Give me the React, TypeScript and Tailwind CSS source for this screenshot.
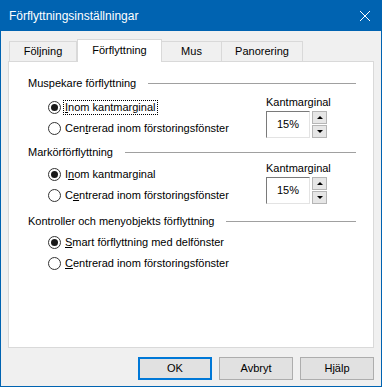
import React from "react";

const font = { fontFamily: "Tahoma, 'Liberation Sans', Arial, sans-serif" };

function Radio({ checked, children, focus }: { checked?: boolean; children: React.ReactNode; focus?: boolean }) {
  return (
    <div className="flex items-center h-[21px]">
      <span className="w-[13px] h-[13px] rounded-full border border-[#333] bg-white flex items-center justify-center ml-[39px] mr-[3px]">
        {checked && <span className="w-[7px] h-[7px] rounded-full bg-[#1a1a1a]" />}
      </span>
      <span className={focus ? "outline outline-1 outline-dotted outline-[#000] px-[1px] leading-[13px]" : "px-[1px]"}>
        {children}
      </span>
    </div>
  );
}

function Legend({ text }: { text: string }) {
  return (
    <div className="flex items-center h-[16px] pl-[19px] pr-[17px]">
      <span>{text}</span>
      <span className="flex-1 h-px bg-[#a0a0a0] ml-[12px]" />
    </div>
  );
}

function Spin({ top }: { top?: boolean }) {
  return (
    <div className={"flex flex-col items-start w-[65px] " + (top ? "pt-[3px]" : "")}>
      <div className="h-[16px] leading-[16px] mb-[1px]">Kantmarginal</div>
      <div className="flex">
        <div className="w-[44px] h-[27px] bg-white border-t border-l border-[#7a7a7a] border-r border-b border-r-[#e3e3e3] border-b-[#e3e3e3] flex items-center justify-center">
          15%
        </div>
        <div className="flex flex-col ml-[2px] gap-[1px]">
          <div className="w-[15px] h-[13px] bg-[#e6e6e6] border border-[#b5b5b5] flex items-center justify-center">
            <span className="w-0 h-0 border-l-[3px] border-r-[3px] border-b-[3px] border-l-transparent border-r-transparent border-b-black" />
          </div>
          <div className="w-[15px] h-[13px] bg-[#e6e6e6] border border-[#b5b5b5] flex items-center justify-center">
            <span className="w-0 h-0 border-l-[3px] border-r-[3px] border-t-[3px] border-l-transparent border-r-transparent border-t-black" />
          </div>
        </div>
      </div>
    </div>
  );
}

function Btn({ label, def }: { label: string; def?: boolean }) {
  return (
    <div
      className={
        "w-[74px] h-[23px] bg-[#e1e1e1] flex items-center justify-center " +
        (def ? "border-2 border-[#0078d7]" : "border border-[#adadad]")
      }
    >
      {label}
    </div>
  );
}

export default function App() {
  return (
    <div style={font} className="w-[382px] h-[387px] bg-[#0063b1] flex flex-col text-[11px] text-black">
      <div className="h-[31px] flex items-center justify-between pl-[9px] pr-[10px] text-white text-[12px]" style={{ fontFamily: "'Segoe UI', 'Liberation Sans', Arial, sans-serif" }}>
        <span>Förflyttningsinställningar</span>
        <svg width="12" height="12" viewBox="0 0 12 12" className="mr-[1px]">
          <path d="M1 1 L11 11 M11 1 L1 11" stroke="white" strokeWidth="1" />
        </svg>
      </div>
      <div className="flex-1 mx-px mb-px bg-[#f0f0f0] flex flex-col px-[7px]">
        <div className="flex items-end h-[30px] pl-[1px]">
          <div className="w-[68px] h-[20px] border border-b-0 border-[#d9d9d9] bg-[#f0f0f0] flex items-center justify-center">Följning</div>
          <div className="w-[85px] h-[23px] border border-b-0 border-[#d9d9d9] bg-white flex items-start justify-center pt-[2px] -mb-px relative z-10">Förflyttning</div>
          <div className="w-[60px] h-[20px] border border-b-0 border-l-0 border-[#d9d9d9] bg-[#f0f0f0] flex items-center justify-center">Mus</div>
          <div className="w-[81px] h-[20px] border border-b-0 border-l-0 border-[#d9d9d9] bg-[#f0f0f0] flex items-center justify-center">Panorering</div>
        </div>
        <div className="h-[287px] bg-white border border-[#d9d9d9] flex flex-col pt-[13px]">
          <Legend text="Muspekare förflyttning" />
          <div className="flex items-start">
            <div className="flex flex-col pt-[6px] w-[257px]">
              <Radio checked focus>
                <span className="underline">I</span>nom kantmarginal
              </Radio>
              <Radio>
                Cen<span className="underline">t</span>rerad inom förstoringsfönster
              </Radio>
            </div>
            <Spin top />
          </div>
          <div className="mt-[5px]">
            <Legend text="Markörförflyttning" />
          </div>
          <div className="flex items-start">
            <div className="flex flex-col pt-[4px] w-[257px]">
              <Radio checked>
                I<span className="underline">n</span>om kantmarginal
              </Radio>
              <Radio>
                C<span className="underline">e</span>ntrerad inom förstoringsfönster
              </Radio>
            </div>
            <Spin />
          </div>
          <div className="mt-[7px]">
            <Legend text="Kontroller och menyobjekts förflyttning" />
          </div>
          <div className="flex flex-col pt-[3px]">
            <Radio checked>
              <span className="underline">S</span>mart förflyttning med delfönster
            </Radio>
            <Radio>
              <span className="underline">C</span>entrerad inom förstoringsfönster
            </Radio>
          </div>
        </div>
        <div className="flex justify-end gap-[7px] mt-[9px]">
          <Btn label="OK" def />
          <Btn label="Avbryt" />
          <Btn label="Hjälp" />
        </div>
      </div>
    </div>
  );
}
